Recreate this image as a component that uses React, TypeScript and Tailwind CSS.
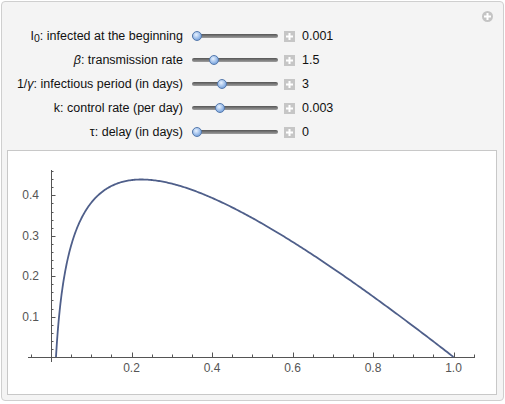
import React from "react";

const rows = [
  { label: <><span>I</span><sub className="text-[10.5px] relative top-[2px] align-baseline">0</sub><span>: infected at the beginning</span></>, thumb: 197, value: "0.001" },
  { label: <><i>β</i><span>: transmission rate</span></>, thumb: 214, value: "1.5" },
  { label: <><span>1/</span><i>γ</i><span>: infectious period (in days)</span></>, thumb: 222, value: "3" },
  { label: <span>k: control rate (per day)</span>, thumb: 220, value: "0.003" },
  { label: <><span>τ</span><span>: delay (in days)</span></>, thumb: 197, value: "0" },
];

function PlusGlyph() {
  return (
    <svg width={7} height={7} viewBox="0 0 7 7" className="block">
      <rect x={2.5} y={0} width={2} height={7} fill="#fff" />
      <rect x={0} y={2.5} width={7} height={2} fill="#fff" />
    </svg>
  );
}

function Slider({ thumb }: { thumb: number }) {
  const pad = thumb - 192 - 5;
  return (
    <div className="relative h-[12px] w-[86px] flex items-center">
      <div className="h-[4px] w-full rounded-full bg-gradient-to-b from-[#555] to-[#a0a0a0]" />
      <div
        className="absolute top-[1px] h-[10px] w-[10px] rounded-full border border-[#5479ad] bg-[radial-gradient(circle_at_40%_35%,#e8f2ff,#92b6e6_60%,#5b8ccd)]"
        style={{ left: pad }}
      />
    </div>
  );
}

function Plot() {
  const X = (v: number) => 43 + 402.5 * v;
  const Y = (v: number) => 206 - 404 * v;
  const pts: string[] = [];
  const s0 = 0.0124;
  const N = 300;
  for (let i = 0; i <= N; i++) {
    const t = i / N;
    const s = s0 + (1 - s0) * Math.pow(t, 1.6);
    let I = 1 - s + 0.225 * Math.log(s);
    if (I < 0) I = 0;
    pts.push(`${X(s).toFixed(2)},${Y(I).toFixed(2)}`);
  }
  const xt: React.ReactNode[] = [];
  for (let k = -1; k <= 21; k++) {
    const v = k * 0.05;
    const major = k % 4 === 0 && k >= 0;
    const x = Math.round(X(v)) + 0.5;
    xt.push(<line key={"x" + k} x1={x} x2={x} y1={206} y2={206 - (major ? 4.5 : 2.5)} stroke="#555" strokeWidth={1} />);
  }
  const yt: React.ReactNode[] = [];
  for (let k = 1; k <= 23; k++) {
    const v = k * 0.02;
    const major = k % 5 === 0;
    const y = Math.round(Y(v)) + 0.5;
    yt.push(<line key={"y" + k} x1={43} x2={43 + (major ? 4.5 : 2.5)} y1={y} y2={y} stroke="#555" strokeWidth={1} />);
  }
  return (
    <svg width={488} height={243} className="block" style={{ fontFamily: "'Liberation Sans', Arial, sans-serif" }}>
      <line x1={20} x2={467} y1={206.5} y2={206.5} stroke="#555" strokeWidth={1} />
      <line x1={43.5} x2={43.5} y1={19} y2={211} stroke="#555" strokeWidth={1} />
      {xt}
      {yt}
      {[0.2, 0.4, 0.6, 0.8, 1.0].map((v) => (
        <text key={v} x={X(v)} y={221} fontSize={12} fill="#555" textAnchor="middle">
          {v.toFixed(1)}
        </text>
      ))}
      {[0.1, 0.2, 0.3, 0.4].map((v) => (
        <text key={v} x={31} y={Y(v) + 4} fontSize={12} fill="#555" textAnchor="end">
          {v.toFixed(1)}
        </text>
      ))}
      <polyline points={pts.join(" ")} fill="none" stroke="#4f5f8a" strokeWidth={1.8} strokeLinejoin="round" />
    </svg>
  );
}

export default function App() {
  return (
    <div className="w-[505px] h-[404px] bg-white p-[1px]" style={{ fontFamily: "'Liberation Sans', Arial, sans-serif" }}>
      <div className="relative w-[503px] h-[400px] rounded-[4px] border border-[#cfcfcf] bg-[#f4f4f4] flex flex-col">
        <div className="absolute right-[10px] top-[9px] w-[11px] h-[11px] rounded-full bg-[#c4c4c4] flex items-center justify-center">
          <PlusGlyph />
        </div>
        <div className="mt-[22px] grid grid-cols-[181px_86px_auto] auto-rows-[24px] items-center text-[12.5px] text-[#111]">
          {rows.map((r, i) => (
            <React.Fragment key={i}>
              <div className="text-right whitespace-nowrap">{r.label}</div>
              <div className="ml-[9px]">
                <Slider thumb={r.thumb} />
              </div>
              <div className="flex items-center gap-[7px] ml-[15px]">
                <div className="w-[11px] h-[11px] bg-[#c6c6c6] flex items-center justify-center">
                  <PlusGlyph />
                </div>
                <span>{r.value}</span>
              </div>
            </React.Fragment>
          ))}
        </div>
        <div className="mt-[6px] ml-[5px] w-[490px] h-[245px] border border-[#c8c8c8] bg-white">
          <Plot />
        </div>
      </div>
    </div>
  );
}
